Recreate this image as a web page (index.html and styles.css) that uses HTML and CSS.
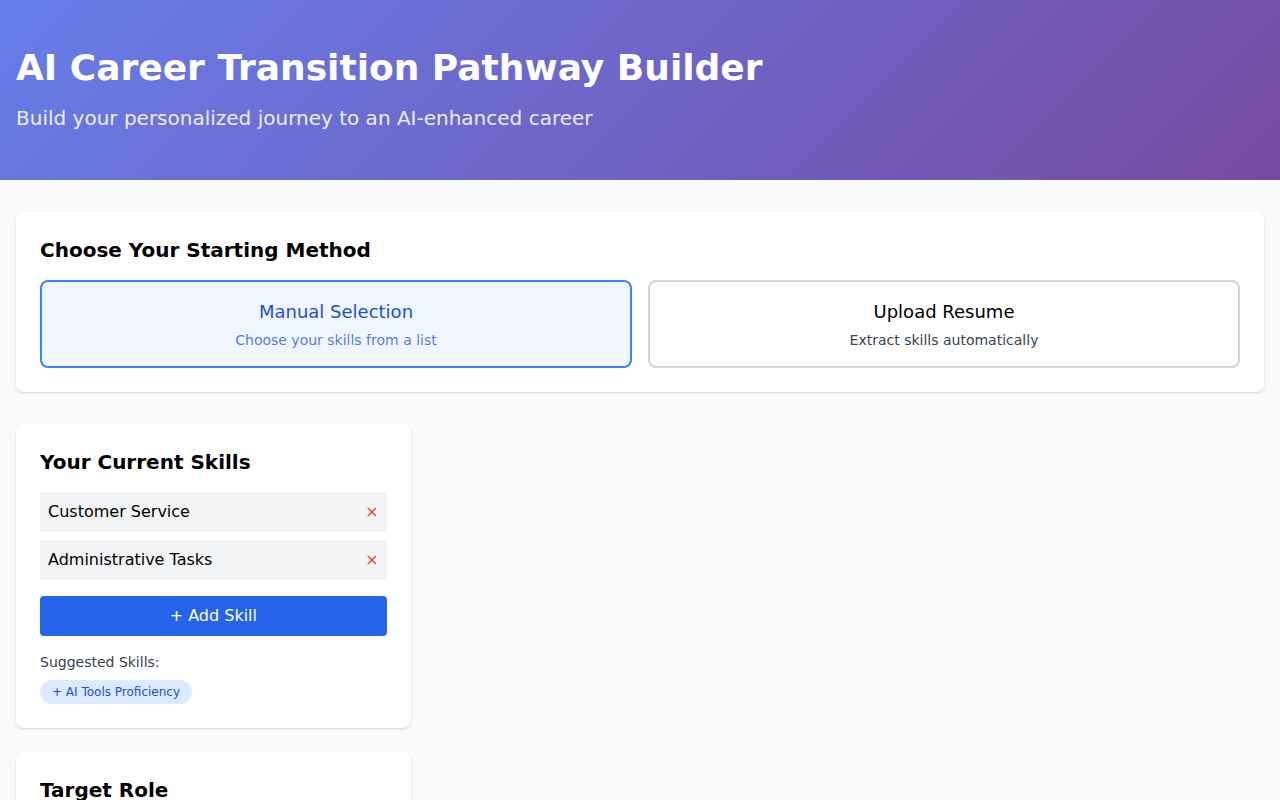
FILE: index.html
```html
<!DOCTYPE html>
<html lang="en">
<head>
<meta charset="utf-8">
<title>AI Career Transition Pathway Builder</title>
<link rel="stylesheet" href="styles.css">
</head>
<body>
<header class="hero">
  <h1 class="hero-title">AI Career Transition Pathway Builder</h1>
  <p class="hero-sub">Build your personalized journey to an AI-enhanced career</p>
</header>
<main class="main">
  <section class="card">
    <h2 class="card-title">Choose Your Starting Method</h2>
    <div class="methods">
      <button class="method method-active">
        <span class="method-name">Manual Selection</span>
        <span class="method-desc">Choose your skills from a list</span>
      </button>
      <button class="method">
        <span class="method-name">Upload Resume</span>
        <span class="method-desc">Extract skills automatically</span>
      </button>
    </div>
  </section>
  <div class="grid">
    <div class="column">
      <section class="card">
        <h2 class="card-title">Your Current Skills</h2>
        <ul class="skills">
          <li class="skill"><span>Customer Service</span><button class="remove">×</button></li>
          <li class="skill"><span>Administrative Tasks</span><button class="remove">×</button></li>
        </ul>
        <button class="add-btn">+ Add Skill</button>
        <p class="suggest-label">Suggested Skills:</p>
        <div class="chips">
          <button class="chip">+ AI Tools Proficiency</button>
        </div>
      </section>
      <section class="card">
        <h2 class="card-title">Target Role</h2>
        <p class="placeholder">Select the role you want to move into.</p>
      </section>
    </div>
    <div class="column"></div>
    <div class="column"></div>
  </div>
</main>
</body>
</html>
```
FILE: styles.css
```css
* { box-sizing: border-box; }
html, body { margin: 0; padding: 0; }
body {
  font-family: "DejaVu Sans", sans-serif;
  background: #f9fafb;
  color: #000;
}
.hero {
  height: 180px;
  padding: 44px 16px 0;
  background: linear-gradient(135deg, #667eea 0%, #764ba2 100%);
  color: #fff;
}
.hero-title {
  margin: 0;
  font-size: 36px;
  line-height: 48px;
  font-weight: 700;
}
.hero-sub {
  margin: 12px 0 0;
  font-size: 20px;
  line-height: 28px;
  color: rgba(255,255,255,0.9);
}
.main {
  padding: 32px 16px;
  display: flex;
  flex-direction: column;
  gap: 32px;
}
.card {
  background: #fff;
  border-radius: 8px;
  box-shadow: 0 1px 3px rgba(0,0,0,0.1), 0 1px 2px rgba(0,0,0,0.06);
  padding: 24px;
}
.card-title {
  margin: 0 0 16px;
  font-size: 20px;
  line-height: 28px;
  font-weight: 700;
}
.methods {
  display: grid;
  grid-template-columns: 1fr 1fr;
  gap: 16px;
}
.method {
  font-family: inherit;
  display: flex;
  flex-direction: column;
  align-items: center;
  height: 88px;
  padding: 16px;
  border: 2px solid #d1d5db;
  border-radius: 8px;
  background: #fff;
  cursor: pointer;
}
.method-name {
  font-size: 18px;
  line-height: 28px;
  color: #000;
}
.method-desc {
  font-size: 14px;
  line-height: 20px;
  color: #374151;
  margin-top: 4px;
}
.method-active {
  border-color: #3b82f6;
  background: #eff6ff;
}
.method-active .method-name { color: #1d4ed8; }
.method-active .method-desc { color: rgba(29, 78, 216, 0.75); }
.grid {
  display: grid;
  grid-template-columns: repeat(3, 1fr);
  gap: 32px;
}
.column {
  display: flex;
  flex-direction: column;
  gap: 24px;
}
.skills {
  list-style: none;
  margin: 0;
  padding: 0;
  display: flex;
  flex-direction: column;
  gap: 8px;
}
.skill {
  display: flex;
  align-items: center;
  justify-content: space-between;
  height: 40px;
  padding: 8px;
  line-height: 24px;
  background: #f3f4f6;
  border-radius: 4px;
  font-size: 16px;
}
.remove {
  border: 0;
  background: none;
  color: #ef4444;
  font-family: inherit;
  font-size: 16px;
  line-height: 24px;
  padding: 0 0 0 4px;
  cursor: pointer;
}
.add-btn {
  width: 100%;
  height: 40px;
  margin-top: 16px;
  padding: 8px 16px;
  line-height: 24px;
  border: 0;
  border-radius: 4px;
  background: #2563eb;
  color: #fff;
  font-family: inherit;
  font-size: 16px;
  cursor: pointer;
}
.suggest-label {
  margin: 16px 0 8px;
  font-size: 14px;
  line-height: 20px;
  color: #374151;
}
.chips { display: flex; flex-wrap: wrap; gap: 8px; }
.chip {
  border: 0;
  border-radius: 9999px;
  background: #dbeafe;
  color: #1d4ed8;
  font-family: inherit;
  font-size: 12px;
  line-height: 16px;
  padding: 4px 12px;
  cursor: pointer;
}
.placeholder {
  margin: 0;
  font-size: 14px;
  color: #374151;
}
```
